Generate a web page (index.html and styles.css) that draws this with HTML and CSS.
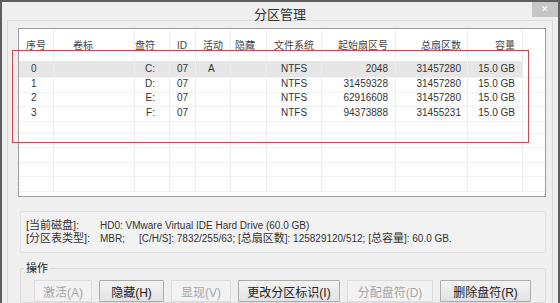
FILE: index.html
```html
<!DOCTYPE html>
<html lang="zh-CN">
<head>
    <meta charset="UTF-8">
    <title>分区管理</title>
    <link rel="stylesheet" href="styles.css">
</head>
<body>
    <div class="window">
        <div class="titlebar">
            <span></span>
            <span class="title">分区管理</span>
            <span class="close">&#x2715;</span>
        </div>

        <div class="client">
            <div class="list">
                <div class="row head">
                    <div>序号</div><div>卷标</div><div>盘符</div><div>ID</div><div>活动</div>
                    <div>隐藏</div><div>文件系统</div><div>起始扇区号</div><div>总扇区数</div><div>容量</div><div></div>
                </div>
                <div class="row selected">
                    <div>0</div><div></div><div>C:</div><div>07</div><div>A</div>
                    <div></div><div>NTFS</div><div>2048</div><div>31457280</div><div>15.0 GB</div><div></div>
                </div>
                <div class="row">
                    <div>1</div><div></div><div>D:</div><div>07</div><div></div>
                    <div></div><div>NTFS</div><div>31459328</div><div>31457280</div><div>15.0 GB</div><div></div>
                </div>
                <div class="row">
                    <div>2</div><div></div><div>E:</div><div>07</div><div></div>
                    <div></div><div>NTFS</div><div>62916608</div><div>31457280</div><div>15.0 GB</div><div></div>
                </div>
                <div class="row">
                    <div>3</div><div></div><div>F:</div><div>07</div><div></div>
                    <div></div><div>NTFS</div><div>94373888</div><div>31455231</div><div>15.0 GB</div><div></div>
                </div>
                <div class="row"><div></div><div></div><div></div><div></div><div></div><div></div><div></div><div></div><div></div><div></div><div></div></div>
                <div class="row"><div></div><div></div><div></div><div></div><div></div><div></div><div></div><div></div><div></div><div></div><div></div></div>
                <div class="row"><div></div><div></div><div></div><div></div><div></div><div></div><div></div><div></div><div></div><div></div><div></div></div>
                <div class="row"><div></div><div></div><div></div><div></div><div></div><div></div><div></div><div></div><div></div><div></div><div></div></div>
                <div class="row"><div></div><div></div><div></div><div></div><div></div><div></div><div></div><div></div><div></div><div></div><div></div></div>
            </div>

            <div class="info">
                <div class="line"><span class="key">[当前磁盘]:</span>HD0: VMware Virtual IDE Hard Drive (60.0 GB)</div>
                <div class="line"><span class="key">[分区表类型]:</span><span class="mbr">MBR;</span>[C/H/S]: 7832/255/63; [<span class="cn">总扇区数</span>]: 125829120/512; [<span class="cn">总容量</span>]: 60.0 GB.</div>
            </div>

            <fieldset class="ops">
                <legend>操作</legend>
                <div class="buttons">
                    <button class="btn w58" disabled>激活(A)</button>
                    <button class="btn w65">隐藏(H)</button>
                    <button class="btn w60" disabled>显现(V)</button>
                    <button class="btn w102">更改分区标识(I)</button>
                    <button class="btn w86" disabled>分配盘符(D)</button>
                    <button class="btn w91">删除盘符(R)</button>
                </div>
            </fieldset>
        </div>

        <!-- red annotation frame drawn over the list -->
        <div class="mark"></div>
    </div>
</body>
</html>
```

FILE: styles.css
```css
body {
    margin: 0;
    background-color: #ffffff;
    font-family: "Liberation Sans", "Noto Sans CJK SC", sans-serif;
    color: #333;
}

.window {
    position: relative;
    width: 560px;
    height: 303px;
    box-sizing: border-box;
    border: 2px solid #5e5e5e;
    border-bottom: none;
    background-color: #efefef;
    overflow: hidden;
}

.titlebar {
    height: 18px;
    display: grid;
    grid-template-columns: 1fr auto 1fr;
}

.titlebar .title {
    padding-top: 5px;
    font-size: 13px;
    line-height: 15px;
    color: #333;
}

.titlebar .close {
    justify-self: end;
    width: 26px;
    height: 15px;
    background-color: #c6c6c6;
    color: #fff;
    font-size: 9px;
    line-height: 15px;
    text-align: center;
}

.client {
    margin: 0 5px;
    height: 300px;
    border: 1px solid #dadada;
    border-bottom: none;
    padding-top: 7px;
}

/* list view */
.list {
    margin-left: 10px;
    width: 528px;
    height: 169px;
    box-sizing: border-box;
    border: 1px solid #9c9c9c;
    background-color: #fff;
    overflow: hidden;
}

.row {
    display: grid;
    grid-template-columns: 35px 81px 35px 26px 35px 36px 55px 74px 72px 55px 22px;
    height: 14.5px;
    font-size: 10px;
    line-height: 16px;
}

.row > div {
    border-right: 1px solid #ededed;
    border-bottom: 1px solid #f2f2f2;
    white-space: nowrap;
}

.row > div:last-child {
    border-right: none;
}

.row.head {
    height: 32px;
    line-height: 33px;
    color: #444;
}

.row.head > div {
    border-bottom: none;
}

.row.selected > div {
    background-color: #e6e6e6;
}

.row.selected > div:last-child {
    background-color: transparent;
}

.row > div:nth-child(1) { padding-left: 12px; }
.row > div:nth-child(2) { padding-left: 19px; }
.row > div:nth-child(3) { text-align: right; padding-right: 14px; }
.row > div:nth-child(4) { padding-left: 7px; }
.row > div:nth-child(5) { padding-left: 12px; }
.row > div:nth-child(6) { padding-left: 4px; }
.row > div:nth-child(7) { text-align: center; }
.row > div:nth-child(8) { text-align: right; padding-right: 7px; }
.row > div:nth-child(9) { text-align: right; padding-right: 6px; }
.row > div:nth-child(10) { text-align: right; padding-right: 7px; }

.row.head > div:nth-child(1),
.row.head > div:nth-child(5) {
    padding-left: 7px;
}

/* disk info */
.info {
    margin: 14px 0 0 12px;
    width: 526px;
    height: 42px;
    box-sizing: border-box;
    padding: 7px 0 0 5px;
    border: 1px solid #e1e1e1;
    border-radius: 2px;
    background-color: #f2f2f2;
    font-size: 10px;
    line-height: 12px;
    color: #333;
}

.info .key {
    display: inline-block;
    width: 74px;
    font-size: 11px;
}

.info .cn {
    font-size: 11px;
}

.info .mbr {
    display: inline-block;
    width: 39px;
}

/* operations group */
.ops {
    margin: 8px 0 0 12px;
    width: 526px;
    box-sizing: border-box;
    padding: 0 0 0 3px;
    border: 1px solid #dcdcdc;
    border-radius: 2px;
}

.ops legend {
    padding: 0 2px;
    font-size: 11px;
    line-height: 14px;
    color: #222;
}

.buttons {
    display: flex;
    gap: 7px;
    margin: 5px 0 0 10px;
}

.btn {
    height: 22px;
    padding: 0;
    border: 1px solid #acacac;
    border-radius: 1px;
    background: linear-gradient(#f3f3f3, #e2e2e2);
    font-family: "Liberation Sans", "Noto Sans CJK SC", sans-serif;
    font-size: 12px;
    color: #222;
}

.btn:disabled {
    border-color: #dcdcdc;
    background: #f2f2f2;
    color: #a6a6a6;
}

.w58 { width: 58px; }
.w60 { width: 60px; }
.w65 { width: 65px; }
.w86 { width: 86px; }
.w91 { width: 91px; }
.w102 { width: 102px; }

.mark {
    position: absolute;
    left: 10px;
    top: 48px;
    width: 517px;
    height: 93px;
    box-sizing: border-box;
    border: 1px solid #cc4656;
}
```
